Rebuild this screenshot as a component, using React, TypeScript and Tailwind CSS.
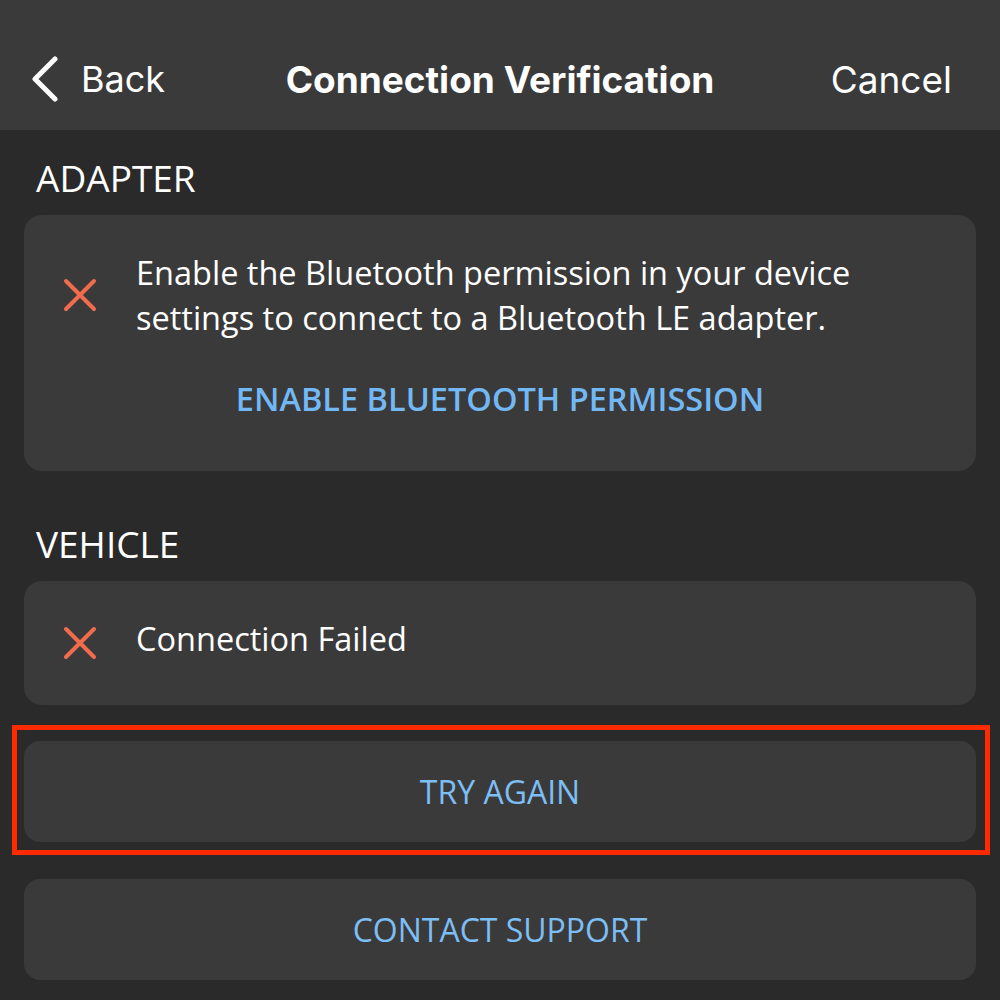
import React from 'react';

const FailIcon: React.FC = () => (
  <svg width="34" height="34" viewBox="0 0 34 34" className="shrink-0">
    <path d="M3 3 L31 31 M31 3 L3 31" stroke="#f26b4c" strokeWidth="4" strokeLinecap="round" fill="none" />
  </svg>
);

const NavBar: React.FC = () => (
  <div className="h-[130px] bg-[#3a3a3a] flex items-center px-[30px] pt-[28px] font-['Inter',sans-serif] text-white">
    <div className="flex-1 flex items-center">
      <svg width="30" height="46" viewBox="0 0 30 46" className="mr-[21px]">
        <path d="M25 3 L5 23 L25 43" stroke="white" strokeWidth="5" strokeLinecap="round" strokeLinejoin="round" fill="none" />
      </svg>
      <span className="text-[36px] leading-none">Back</span>
    </div>
    <h1 className="ml-[18px] text-[37px] leading-none font-bold">Connection Verification</h1>
    <div className="flex-1 flex justify-end pr-[18px]">
      <span className="text-[37px] leading-none">Cancel</span>
    </div>
  </div>
);

const SectionLabel: React.FC<{ children: React.ReactNode }> = ({ children }) => (
  <div className="px-3 text-[37px] leading-[50px] text-white">{children}</div>
);

export default function App() {
  return (
    <div className="w-[1000px] h-[1000px] bg-[#2a2a2a] overflow-hidden font-['Open_Sans',sans-serif]">
      <NavBar />
      <div className="px-6 pt-[23px]">
        <SectionLabel>ADAPTER</SectionLabel>
        <div className="mt-[12px] bg-[#3a3a3a] rounded-[18px] pt-[35px] pb-[50px]">
          <div className="flex items-center pl-[39px] pr-6">
            <FailIcon />
            <p className="ml-[39px] text-[32.5px] leading-[45px] text-white">
              Enable the Bluetooth permission in your device settings to connect to a Bluetooth LE adapter.
            </p>
          </div>
          <div className="mt-[36px] text-center text-[32.5px] leading-[45px] font-semibold text-[#72b8f5]">
            ENABLE BLUETOOTH PERMISSION
          </div>
        </div>

        <div className="mt-[48px]">
          <SectionLabel>VEHICLE</SectionLabel>
        </div>
        <div className="mt-[12px] h-[124px] bg-[#3a3a3a] rounded-[18px] flex items-center pl-[39px]">
          <FailIcon />
          <span className="ml-[39px] mb-[10px] text-[32.5px] leading-[45px] text-white">Connection Failed</span>
        </div>

        <div className="mt-[20px] -ml-3 w-[978px] border-[5px] border-[#ff2a00] pl-[7px] pr-[9px] pt-[11px] pb-[8px]">
          <button className="w-full h-[101px] bg-[#3a3a3a] rounded-[16px] text-[32px] text-[#7dbef5]">
            TRY AGAIN
          </button>
        </div>

        <button className="mt-[24px] w-full h-[101px] bg-[#3a3a3a] rounded-[16px] text-[32px] text-[#7dbef5]">
          CONTACT SUPPORT
        </button>
      </div>
    </div>
  );
}
